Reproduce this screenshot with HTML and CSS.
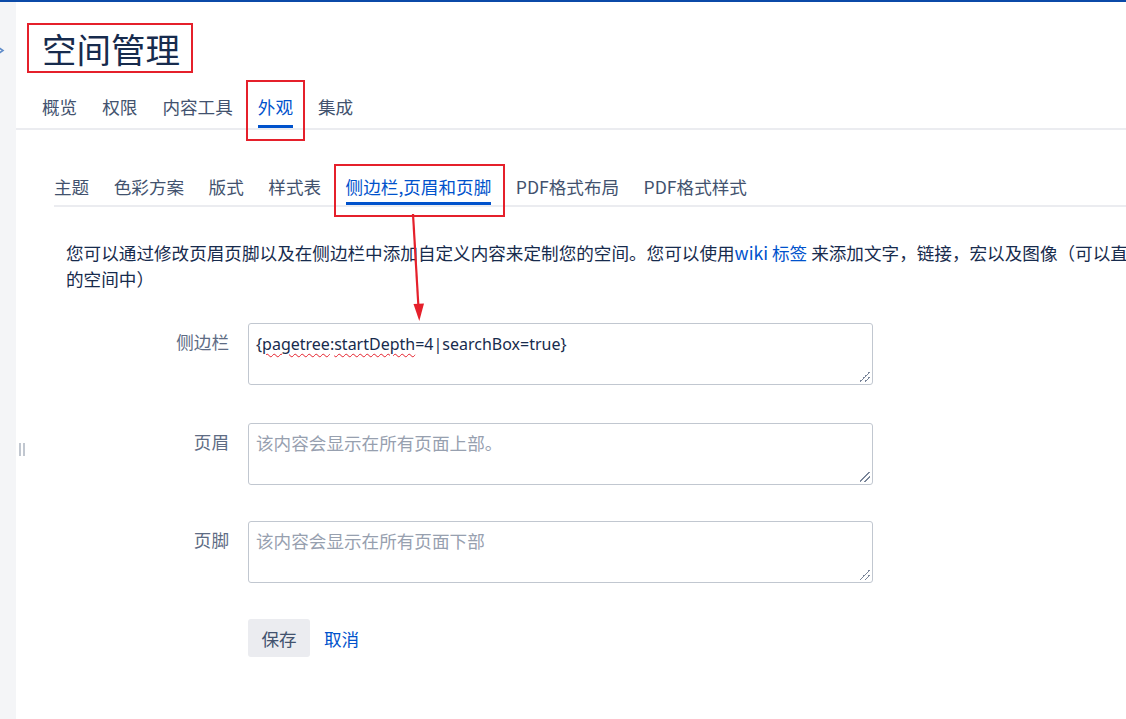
FILE: index.html
```html
<!DOCTYPE html>
<html lang="zh">
<head>
<meta charset="utf-8">
<link rel="stylesheet" href="styles.css">
</head>
<body>
<div class="page">
  <aside class="rail">
    <svg class="rail-chev" width="6" height="10" viewBox="0 0 6 10"><path d="M-2 2 L3 5.5 L-2 9" fill="none" stroke="#5e8bc9" stroke-width="1.6"/></svg>
    <span class="rail-grip"><i></i><i></i></span>
  </aside>
  <main class="main">
    <header class="head">
      <h1 class="title">空间管理</h1>
    </header>
    <nav class="tabs">
      <a class="tab">概览</a>
      <a class="tab">权限</a>
      <a class="tab">内容工具</a>
      <a class="tab active mark">外观</a>
      <a class="tab">集成</a>
    </nav>
    <section class="content">
      <nav class="subtabs">
        <a class="subtab">主题</a>
        <a class="subtab">色彩方案</a>
        <a class="subtab">版式</a>
        <a class="subtab">样式表</a>
        <a class="subtab active mark2">侧边栏,页眉和页脚</a>
        <a class="subtab">PDF格式布局</a>
        <a class="subtab">PDF格式样式</a>
      </nav>
      <div class="intro-wrap">
        <p class="intro">您可以通过修改页眉页脚以及在侧边栏中添加自定义内容来定制您的空间。您可以使用<a class="link">wiki 标签</a> 来添加文字，链接，宏以及图像（可以直接附加到您<br>的空间中）</p>
      </div>
      <form class="form">
        <div class="row">
          <label class="label">侧边栏</label>
          <div class="field"><span class="val">{<span class="spell">pagetree</span>:<span class="spell">startDepth</span>=4|searchBox=true}</span><span class="grip"></span></div>
        </div>
        <div class="row">
          <label class="label">页眉</label>
          <div class="field"><span class="ph">该内容会显示在所有页面上部。</span><span class="grip"></span></div>
        </div>
        <div class="row">
          <label class="label">页脚</label>
          <div class="field"><span class="ph">该内容会显示在所有页面下部</span><span class="grip"></span></div>
        </div>
        <div class="actions">
          <button type="button" class="btn">保存</button>
          <a class="link cancel">取消</a>
        </div>
      </form>
    </section>
  </main>
  <svg class="arrow" width="30" height="120" viewBox="0 0 30 120">
    <line x1="10" y1="0" x2="15.5" y2="94" stroke="#e5202b" stroke-width="2.2"/>
    <path d="M10.5 90 L16.3 107 L21 89.5 Z" fill="#e5202b"/>
  </svg>
</div>
</body>
</html>
```
FILE: styles.css
```css
* { box-sizing: border-box; }
html, body { margin: 0; padding: 0; overflow: hidden; }
body {
  width: 1126px;
  height: 719px;
  background: #fff;
  font-family: "Noto Sans CJK SC", "Noto Sans", sans-serif;
  color: #172b4d;
  font-size: 17.6px;
}
.page {
  position: relative;
  display: flex;
  height: 719px;
  border-top: 2px solid #0b4aa8;
}
.rail {
  position: relative;
  width: 16px;
  flex: none;
  background: #f4f5f7;
}
.rail-chev { position: absolute; left: 0; top: 43px; }
.rail-grip { position: absolute; left: 19px; top: 441px; display: flex; gap: 2px; }
.rail-grip i { display: block; width: 2px; height: 13px; background: #c1c7d0; }
.main { flex: 1; min-width: 0; }
.head { padding: 21px 0 0 11px; height: 78px; }
.title {
  display: inline-block;
  margin: 0;
  font-size: 34.5px;
  font-weight: 400;
  line-height: 46px;
  padding: 0 11px 0 13px;
  border: 2px solid #e5202b;
  color: #172b4d;
}
.tabs {
  display: flex;
  gap: 25px;
  padding-left: 26px;
  border-bottom: 2px solid #ebecf0;
  height: 50px;
}
.tab {
  position: relative;
  font-size: 17.6px;
  color: #42526e;
  line-height: 26px;
  padding-top: 14px;
  height: 48px;
}
.tab.active { color: #0052cc; }
.tab.active::after {
  content: "";
  position: absolute;
  left: 0; right: 0; bottom: 0;
  height: 3px;
  background: #0052cc;
}
.tab.mark::before {
  content: "";
  position: absolute;
  left: -12px; right: -12px; top: 0; bottom: -13px;
  border: 2px solid #e5202b;
}
.content { padding: 0 0 0 38px; }
.subtabs {
  display: flex;
  gap: 24.5px;
  margin-top: 36px;
  border-bottom: 2px solid #ebecf0;
  height: 41px;
  white-space: nowrap;
}
.subtab {
  position: relative;
  font-size: 17.6px;
  color: #42526e;
  line-height: 26px;
  padding-top: 8px;
  height: 39px;
}
.subtab.active { color: #0052cc; }
.subtab.active::after {
  content: "";
  position: absolute;
  left: 0; right: 0; bottom: 0;
  height: 3px;
  background: #0052cc;
}
.subtab.mark2::before {
  content: "";
  position: absolute;
  left: -12px; right: -14px; top: -2px; bottom: -12px;
  border: 2px solid #e5202b;
}
.intro-wrap { overflow: hidden; margin-top: 33px; }
.intro {
  margin: 0 0 0 12px;
  line-height: 26px;
  white-space: nowrap;
  color: #172b4d;
}
.link { color: #0052cc; text-decoration: none; }
.form { margin-top: 31px; }
.row { display: flex; gap: 19px; margin-bottom: 38px; }
.row + .row { margin-bottom: 36px; }
.label {
  width: 175px;
  text-align: right;
  color: #5e6c84;
  padding-top: 6px;
  line-height: 26px;
}
.field {
  position: relative;
  width: 625px;
  height: 62px;
  border: 1px solid #c1c7d0;
  border-radius: 3px;
  padding: 6px 7px;
  line-height: 26px;
  font-size: 17.6px;
}
.val { font-family: "Noto Sans", "Noto Sans CJK SC", sans-serif; font-size: 16px; color: #172b4d; }
.spell { text-decoration: underline wavy #e5202b; text-decoration-thickness: 1px; text-underline-offset: 3px; }
.ph { color: #97a0af; }
.grip {
  position: absolute;
  right: 2px; bottom: 2px;
  width: 10px; height: 10px;
  background: linear-gradient(135deg, transparent 45%, #7a869a 45%, #7a869a 52%, transparent 52%, transparent 70%, #7a869a 70%, #7a869a 77%, transparent 77%);
}
.actions { display: flex; align-items: center; gap: 14px; padding-left: 194px; }
.btn {
  width: 62px;
  height: 38px;
  border: none;
  border-radius: 3px;
  background: #ebecf0;
  color: #42526e;
  font-family: inherit;
  font-size: 17.6px;
  padding: 0;
}
.cancel { font-size: 17.6px; }
.arrow { position: absolute; left: 403px; top: 212px; }
```
